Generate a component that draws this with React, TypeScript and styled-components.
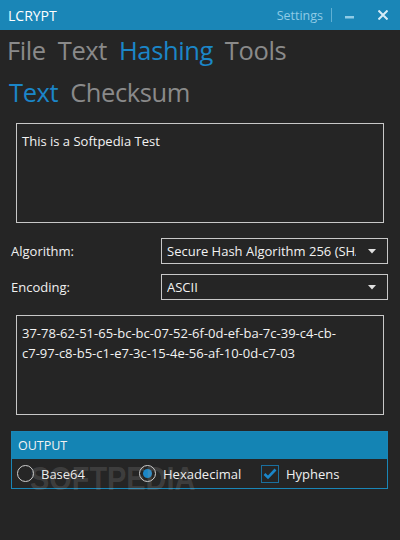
import React from "react";
import styled, { createGlobalStyle } from "styled-components";

const GlobalStyle = createGlobalStyle`
  html, body {
    margin: 0;
    padding: 0;
    background: #252525;
  }
  body {
    font-family: "Open Sans", "Noto Sans", sans-serif;
  }
`;

const Window = styled.div`
  position: relative;
  width: 400px;
  height: 540px;
  background: #252525;
  display: flex;
  flex-direction: column;
  overflow: hidden;
`;

const TitleBar = styled.div`
  height: 30px;
  background: #1a86b7;
  display: flex;
  align-items: center;
  padding: 0 12px 0 8px;
  box-sizing: border-box;
`;

const AppName = styled.div`
  color: #ffffff;
  font-size: 14px;
  flex: 1;
`;

const SettingsLink = styled.div`
  color: #8fcbe6;
  font-size: 12.5px;
  margin-right: 8px;
`;

const Divider = styled.div`
  width: 1px;
  height: 14px;
  background: #5fb0d4;
  margin-right: 13px;
`;

const WinButton = styled.div<{ $w: number }>`
  width: ${({ $w }) => $w}px;
  display: flex;
  align-items: center;
  justify-content: flex-start;
`;

const MenuRow = styled.div<{ $pad: number }>`
  display: flex;
  gap: 12px;
  font-size: 25.5px;
  padding-left: ${({ $pad }) => $pad}px;
  line-height: 1;
  letter-spacing: -0.4px;
`;

const MenuItem = styled.span<{ $active?: boolean }>`
  color: ${({ $active }) => ($active ? "#1b86c8" : "#8a8a8a")};
`;

const Body = styled.div`
  display: flex;
  flex-direction: column;
  padding: 0 12px 0 11px;
`;

const TextBox = styled.div`
  margin: 0 4px 0 5px;
  height: 100px;
  border: 1px solid #c8c8c8;
  box-sizing: border-box;
  padding: 7px 5px;
  color: #f2f2f2;
  font-size: 13px;
  line-height: 20px;
`;

const FieldRow = styled.div`
  display: flex;
  align-items: center;
`;

const FieldLabel = styled.div`
  width: 150px;
  flex-shrink: 0;
  color: #f0f0f0;
  font-size: 13px;
`;

const Select = styled.div`
  flex: 1;
  min-width: 0;
  height: 26px;
  border: 1px solid #c8c8c8;
  box-sizing: border-box;
  display: flex;
  align-items: center;
  padding-left: 5px;
  color: #f2f2f2;
  font-size: 13px;
`;

const SelectValue = styled.div`
  flex: 1;
  min-width: 0;
  white-space: nowrap;
  overflow: hidden;
  text-overflow: clip;
`;

const SelectArrow = styled.div`
  width: 31px;
  flex-shrink: 0;
  display: flex;
  align-items: center;
  justify-content: center;
`;

const Group = styled.div`
  border: 1px solid #1a86b7;
`;

const GroupHeader = styled.div`
  height: 27px;
  background: #1484b4;
  color: #f2f2f2;
  font-size: 12.5px;
  display: flex;
  align-items: center;
  padding-left: 6px;
`;

const OptionRow = styled.div`
  height: 29px;
  display: flex;
  align-items: center;
  padding-left: 5px;
`;

const Option = styled.div<{ $width: number }>`
  width: ${({ $width }) => $width}px;
  display: flex;
  align-items: center;
  gap: 7px;
  color: #f0f0f0;
  font-size: 13px;
`;

const Radio = styled.div<{ $checked?: boolean }>`
  width: 17px;
  height: 17px;
  border-radius: 50%;
  border: 1.5px solid #cfcfcf;
  box-sizing: border-box;
  display: flex;
  align-items: center;
  justify-content: center;
  &::after {
    content: "";
    display: ${({ $checked }) => ($checked ? "block" : "none")};
    width: 9px;
    height: 9px;
    border-radius: 50%;
    background: #1b86c8;
  }
`;

const CheckBox = styled.div`
  width: 18px;
  height: 18px;
  border: 1px solid #1a6f9e;
  box-sizing: border-box;
  display: flex;
  align-items: center;
  justify-content: center;
`;

const Watermark = styled.div`
  position: absolute;
  left: 30px;
  top: 459px;
  font-family: "Liberation Sans", Arial, sans-serif;
  font-weight: bold;
  font-size: 34px;
  transform: scaleX(0.85);
  transform-origin: left center;
  color: rgba(170, 170, 170, 0.2);
  pointer-events: none;
`;

const Spacer = styled.div<{ $h: number }>`
  height: ${({ $h }) => $h}px;
  flex-shrink: 0;
`;

const Arrow = () => (
  <svg width="8" height="5" viewBox="0 0 8 5">
    <path d="M0 0 H8 L4 4.5 Z" fill="#e0e0e0" />
  </svg>
);

export default function App() {
  return (
    <>
      <GlobalStyle />
      <Window>
        <TitleBar>
          <AppName>LCRYPT</AppName>
          <SettingsLink>Settings</SettingsLink>
          <Divider />
          <WinButton $w={33}>
            <svg width="9" height="10" viewBox="0 0 9 10">
              <rect x="0" y="6" width="9" height="2.5" fill="#8fcbe6" />
            </svg>
          </WinButton>
          <WinButton $w={10}>
            <svg width="10" height="10" viewBox="0 0 10 10">
              <path d="M0.5 0.5 L9.5 9.5 M9.5 0.5 L0.5 9.5" stroke="#d6ecf7" strokeWidth="2" />
            </svg>
          </WinButton>
        </TitleBar>
        <Spacer $h={8} />
        <MenuRow $pad={7}>
          <MenuItem>File</MenuItem>
          <MenuItem>Text</MenuItem>
          <MenuItem $active>Hashing</MenuItem>
          <MenuItem>Tools</MenuItem>
        </MenuRow>
        <Spacer $h={16} />
        <MenuRow $pad={9}>
          <MenuItem $active>Text</MenuItem>
          <MenuItem>Checksum</MenuItem>
        </MenuRow>
        <Spacer $h={18} />
        <Body>
          <TextBox>This is a Softpedia Test</TextBox>
          <Spacer $h={15} />
          <FieldRow>
            <FieldLabel>Algorithm:</FieldLabel>
            <Select>
              <SelectValue>Secure Hash Algorithm 256 (SHA256)</SelectValue>
              <SelectArrow>
                <Arrow />
              </SelectArrow>
            </Select>
          </FieldRow>
          <Spacer $h={10} />
          <FieldRow>
            <FieldLabel>Encoding:</FieldLabel>
            <Select>
              <SelectValue>ASCII</SelectValue>
              <SelectArrow>
                <Arrow />
              </SelectArrow>
            </Select>
          </FieldRow>
          <Spacer $h={15} />
          <TextBox>
            37-78-62-51-65-bc-bc-07-52-6f-0d-ef-ba-7c-39-c4-cb-
            <br />
            c7-97-c8-b5-c1-e7-3c-15-4e-56-af-10-0d-c7-03
          </TextBox>
          <Spacer $h={16} />
          <Group>
            <GroupHeader>OUTPUT</GroupHeader>
            <OptionRow>
              <Option $width={122}>
                <Radio />
                Base64
              </Option>
              <Option $width={122}>
                <Radio $checked />
                Hexadecimal
              </Option>
              <Option $width={120}>
                <CheckBox>
                  <svg width="14" height="12" viewBox="0 0 14 12">
                    <path d="M1.5 6 L5 9.5 L12.5 1.5" stroke="#1b86c8" strokeWidth="2.6" fill="none" />
                  </svg>
                </CheckBox>
                Hyphens
              </Option>
            </OptionRow>
          </Group>
        </Body>
        <Watermark>SOFTPEDIA</Watermark>
      </Window>
    </>
  );
}
